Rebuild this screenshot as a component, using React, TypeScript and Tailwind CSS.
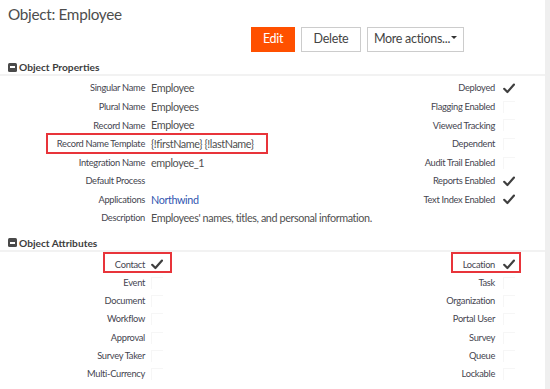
import React from "react";

const Check = () => (
  <svg width="12" height="11" viewBox="0 0 12 11" className="block">
    <path d="M1.2 5.8 L4.4 9 L11 1.6" fill="none" stroke="#3f3f3f" strokeWidth="2.2" strokeLinecap="round" strokeLinejoin="round" />
  </svg>
);

const Empty = () => <div className="w-[12px] h-[12px] border-l border-t border-[#f6f6f6]" />;

const SectionHeader = ({ title }: { title: string }) => (
  <div className="flex items-center h-[16px] pl-[8px] border-b-2 border-[#f2f2f2]">
    <div className="w-[9px] h-[9px] bg-[#4a4a4a] rounded-[1.5px] flex items-center justify-center">
      <div className="w-[5px] h-[1.5px] bg-white" />
    </div>
    <span className="ml-[2px] text-[10.2px] font-bold text-[#3d3d3d] leading-none">{title}</span>
  </div>
);

const label = "text-[9.3px] tracking-[-0.3px] text-[#45454f]";
const value = "text-[10.8px] tracking-[-0.4px] text-[#505050] whitespace-nowrap";

const props: { l: string; v: React.ReactNode; r?: string; c?: boolean }[] = [
  { l: "Singular Name", v: "Employee", r: "Deployed", c: true },
  { l: "Plural Name", v: "Employees", r: "Flagging Enabled", c: false },
  { l: "Record Name", v: "Employee", r: "Viewed Tracking", c: false },
  { l: "Record Name Template", v: "{!firstName} {!lastName}", r: "Dependent", c: false },
  { l: "Integration Name", v: "employee_1", r: "Audit Trail Enabled", c: false },
  { l: "Default Process", v: "", r: "Reports Enabled", c: true },
  { l: "Applications", v: <span className="text-[#2f56b0]">Northwind</span>, r: "Text Index Enabled", c: true },
];

const attrs: [string, boolean, string, boolean][] = [
  ["Contact", true, "Location", true],
  ["Event", false, "Task", false],
  ["Document", false, "Organization", false],
  ["Workflow", false, "Portal User", false],
  ["Approval", false, "Survey", false],
  ["Survey Taker", false, "Queue", false],
  ["Multi-Currency", false, "Lockable", false],
];

export default function App() {
  return (
    <div className="w-[550px] h-[389px] flex overflow-hidden bg-white" style={{ fontFamily: "Lato, 'Open Sans', sans-serif" }}>
      <div className="w-[545px] relative">
        <div className="h-[26px] pt-[4px] pl-[8px]">
          <div className="text-[15.3px] tracking-[-0.3px] leading-[20px] text-[#4d4d4d]">Object: Employee</div>
        </div>
        <div className="mt-[1px] h-[25px] flex gap-[6px] pl-[251px]">
          <button className="w-[44px] h-[25px] bg-[#ff5000] text-white text-[12.5px] tracking-[-0.3px]">Edit</button>
          <button className="w-[60px] h-[25px] border border-[#cccccc] text-[#444] text-[12.5px] tracking-[-0.3px] bg-white">Delete</button>
          <button className="w-[97px] h-[25px] border border-[#cccccc] text-[#444] text-[12.5px] tracking-[-0.3px] bg-white flex items-center justify-center">
            More actions...
            <span className="ml-[1px] inline-block w-0 h-0 border-l-[3px] border-r-[3px] border-t-[3px] border-l-transparent border-r-transparent border-t-[#333] mb-[4px]" />
          </button>
        </div>
        <div className="mt-[8px]">
          <SectionHeader title="Object Properties" />
        </div>
        <div className="pt-[3px] grid grid-cols-[145px_1fr_auto_50px] auto-rows-[18.6px] items-center">
          {props.map((p) => (
            <React.Fragment key={p.l}>
              <div className={`text-right ${label}`}>{p.l}</div>
              <div className={`pl-[6px] ${value}`}>{p.v}</div>
              <div className={`text-right ${label}`}>{p.r}</div>
              <div className="pl-[8px]">{p.c ? <Check /> : <Empty />}</div>
            </React.Fragment>
          ))}
          <div className={`text-right ${label}`}>Description</div>
          <div className={`col-span-3 pl-[6px] ${value}`}>Employees' names, titles, and personal information.</div>
        </div>
        <div className="mt-[8px]">
          <SectionHeader title="Object Attributes" />
        </div>
        <div className="pt-[4px] grid grid-cols-[145px_1fr_50px] auto-rows-[18.2px] items-center">
          {attrs.map(([a, ac, b, bc]) => (
            <React.Fragment key={a}>
              <div className={`text-right ${label}`}>{a}</div>
              <div className="flex items-center">
                <div className="pl-[6px]">{ac ? <Check /> : <Empty />}</div>
                <div className={`flex-1 text-right ${label}`}>{b}</div>
              </div>
              <div className="pl-[8px]">{bc ? <Check /> : <Empty />}</div>
            </React.Fragment>
          ))}
        </div>
        <div className="absolute left-[46px] top-[133px] w-[222px] h-[21px] border-2 border-[#e8343a]" />
        <div className="absolute left-[103px] top-[252px] w-[69px] h-[21px] border-2 border-[#e8343a]" />
        <div className="absolute left-[451px] top-[252px] w-[70px] h-[21px] border-2 border-[#e8343a]" />
      </div>
      <div className="w-[5px] bg-[#efefef]" />
    </div>
  );
}
